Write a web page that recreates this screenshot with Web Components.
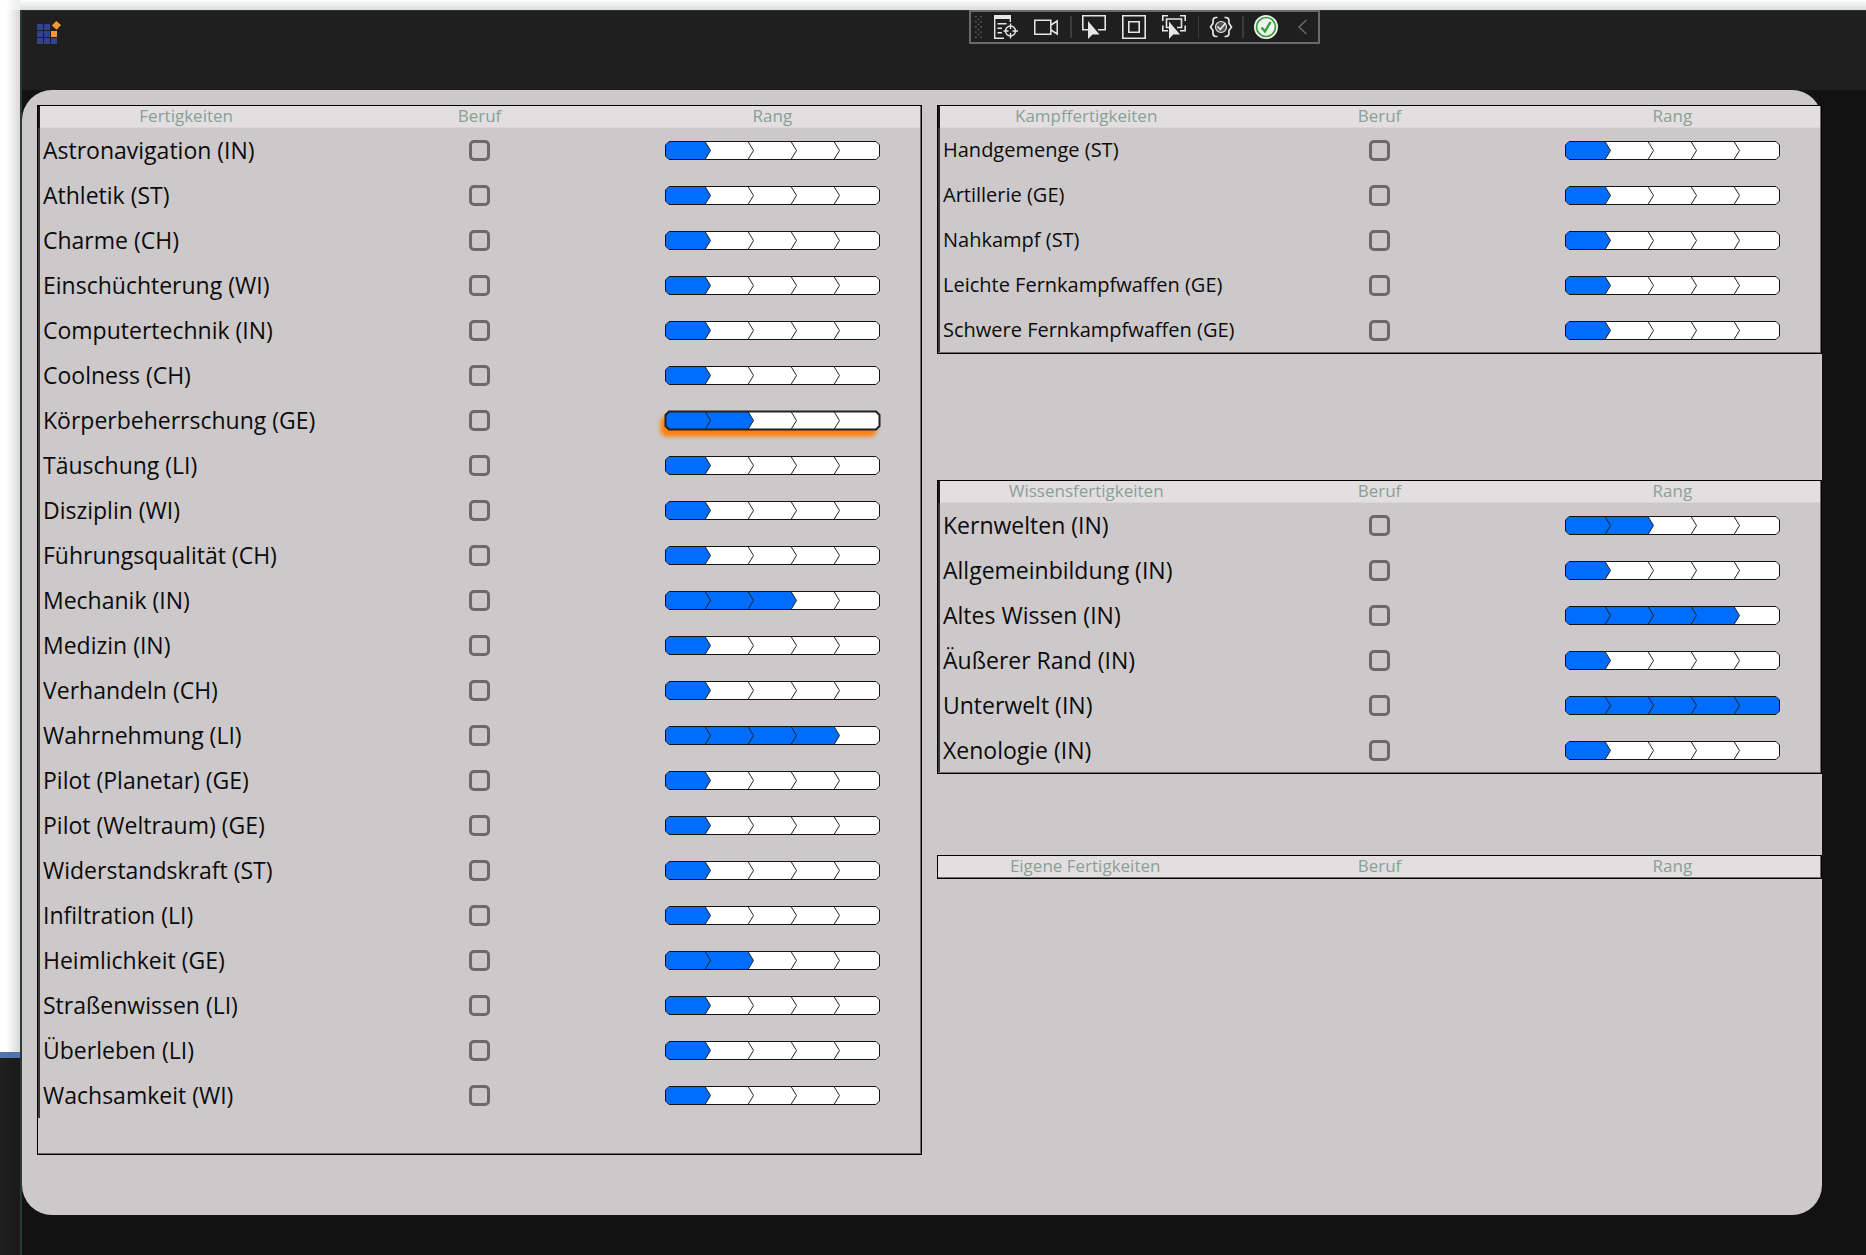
<!DOCTYPE html>
<html lang="de">
<head>
<meta charset="utf-8">
<title>Fertigkeiten</title>
<style>
  html, body { margin: 0; height: 100%; }
  body { font-family: "Open Sans", "Noto Sans", sans-serif; color: #0b0b0b; background: #fff; }
</style>
</head>
<body>
<app-desktop>
  <app-window>
    <app-logo slot="title"></app-logo>
    <debug-toolbar slot="overlay"></debug-toolbar>
    <skill-sheet>
      <skill-table slot="main" heading="Fertigkeiten">
        <skill-item rank="1">Astronavigation (IN)</skill-item>
        <skill-item rank="1">Athletik (ST)</skill-item>
        <skill-item rank="1">Charme (CH)</skill-item>
        <skill-item rank="1">Einschüchterung (WI)</skill-item>
        <skill-item rank="1">Computertechnik (IN)</skill-item>
        <skill-item rank="1">Coolness (CH)</skill-item>
        <skill-item rank="2" active>Körperbeherrschung (GE)</skill-item>
        <skill-item rank="1">Täuschung (LI)</skill-item>
        <skill-item rank="1">Disziplin (WI)</skill-item>
        <skill-item rank="1">Führungsqualität (CH)</skill-item>
        <skill-item rank="3">Mechanik (IN)</skill-item>
        <skill-item rank="1">Medizin (IN)</skill-item>
        <skill-item rank="1">Verhandeln (CH)</skill-item>
        <skill-item rank="4">Wahrnehmung (LI)</skill-item>
        <skill-item rank="1">Pilot (Planetar) (GE)</skill-item>
        <skill-item rank="1">Pilot (Weltraum) (GE)</skill-item>
        <skill-item rank="1">Widerstandskraft (ST)</skill-item>
        <skill-item rank="1">Infiltration (LI)</skill-item>
        <skill-item rank="2">Heimlichkeit (GE)</skill-item>
        <skill-item rank="1">Straßenwissen (LI)</skill-item>
        <skill-item rank="1">Überleben (LI)</skill-item>
        <skill-item rank="1">Wachsamkeit (WI)</skill-item>
      </skill-table>
      <skill-table slot="combat" heading="Kampffertigkeiten" compact>
        <skill-item rank="1">Handgemenge (ST)</skill-item>
        <skill-item rank="1">Artillerie (GE)</skill-item>
        <skill-item rank="1">Nahkampf (ST)</skill-item>
        <skill-item rank="1">Leichte Fernkampfwaffen (GE)</skill-item>
        <skill-item rank="1">Schwere Fernkampfwaffen (GE)</skill-item>
      </skill-table>
      <skill-table slot="knowledge" heading="Wissensfertigkeiten">
        <skill-item rank="2">Kernwelten (IN)</skill-item>
        <skill-item rank="1">Allgemeinbildung (IN)</skill-item>
        <skill-item rank="4">Altes Wissen (IN)</skill-item>
        <skill-item rank="1">Äußerer Rand (IN)</skill-item>
        <skill-item rank="5">Unterwelt (IN)</skill-item>
        <skill-item rank="1">Xenologie (IN)</skill-item>
      </skill-table>
      <skill-table slot="custom" heading="Eigene Fertigkeiten"></skill-table>
    </skill-sheet>
  </app-window>
</app-desktop>

<script>
const define = (name, html) => customElements.define(name, class extends HTMLElement {
  constructor() { super(); this.attachShadow({ mode: 'open' }).innerHTML = html; }
});

/* Backdrop: other windows showing at the top and left of the app */
define('app-desktop', `
  <style>
    :host { display: grid; box-sizing: border-box; min-height: 100vh; grid-template-columns: 20px 1fr; grid-template-rows: 10px 1fr; }
    .top { background: linear-gradient(#fdfdfd, #dcdcdc); }
    .side { display: flex; flex-direction: column; }
    .page { flex: 1; background: linear-gradient(90deg, #fff 30%, #d8d8d8); }
    .line { height: 6px; background: #5074ae; }
    .dark { height: 197px; background: linear-gradient(90deg, #202020, #191919); }
    .corner { background: linear-gradient(90deg, #fff 30%, #ececec); }
  </style>
  <div class="corner"></div>
  <div class="top"></div>
  <div class="side"><div class="page"></div><div class="line"></div><div class="dark"></div></div>
  <slot></slot>`);

define('app-window', `
  <style>
    :host { display: flex; flex-direction: column; position: relative; box-sizing: border-box; background: #121212; border-left: 2px solid #2a3a2e; }
    header { display: flex; align-items: flex-start; box-sizing: border-box; height: 80px; padding: 10px 15px; background: #1f1f1f; border-top: 1px solid #24382b; }
    main { flex: 1; display: flex; padding: 0 44px 40px 0; }
    ::slotted(skill-sheet) { flex: 1; }
    ::slotted(debug-toolbar) { position: absolute; top: 0; left: 947px; }
  </style>
  <header><slot name="title"></slot></header>
  <main><slot></slot></main>
  <slot name="overlay"></slot>`);

define('app-logo', `
  <style>:host { display: block; } svg { display: block; }</style>
  <svg width="24" height="24" viewBox="0 0 24 24" aria-hidden="true">
    <g fill="#33438a">
      <rect x="0" y="3" width="6" height="6"/><rect x="7" y="3" width="6" height="6"/>
      <rect x="0" y="10" width="6" height="6"/><rect x="7" y="10" width="6" height="6"/>
      <rect x="0" y="17" width="6" height="6"/><rect x="7" y="17" width="6" height="6"/><rect x="14" y="17" width="6" height="6"/>
    </g>
    <g fill="#f79a30"><rect x="14" y="10" width="6" height="6"/><path d="M19.3 0 24 4 19.6 8.800 14.800 4.500Z"/></g>
  </svg>`);

define('debug-toolbar', `
  <style>
    :host { display: flex; align-items: center; box-sizing: border-box; height: 34px; width: 351px; border: 2px solid #6a6a6a; background: #1f1f1f; }
    button { all: unset; display: block; width: 24px; height: 24px; margin-right: 16px; }
    button.end { margin-right: 12px; }
    button.near { margin-right: 9px; }
    button:last-child { margin-right: 0; }
    svg { display: block; }
    .grip { margin: 0 12px 0 4px; }
    i { width: 2px; height: 22px; background: #3d3d3d; margin-right: 10px; }
  </style>
  <svg class="grip" width="8" height="26" viewBox="0 0 8 26" aria-hidden="true">
    <path d="M0 1h8M0 7h8M0 13h8M0 19h8M0 25h8" stroke="#606060" stroke-width="1.500" stroke-dasharray="2 4"/>
    <path d="M3 4h5M3 10h5M3 16h5M3 22h5" stroke="#606060" stroke-width="1.500" stroke-dasharray="2 4"/>
  </svg>
  <button aria-label="Visuelle Struktur"><svg width="24" height="24" viewBox="0 0 24 24" fill="none" stroke="#e6e6e6" stroke-width="1.400">
    <path d="M0 0h17v4H0z" fill="#e6e6e6" stroke="none"/><path d="M.7 3v20.300H10M16.300 3v4M3.500 8.700h9M3.500 13.200h4.500M3.500 17.700h4.500"/>
    <circle cx="16.500" cy="16" r="5"/><path d="M16.500 8.500v5.500M16.500 18v5.500M9.500 16h5M18.500 16h5.500"/></svg></button>
  <button class="end" aria-label="Aufnahme"><svg width="24" height="24" viewBox="0 0 24 24" fill="none" stroke="#e6e6e6" stroke-width="1.500">
    <path d="M.8 5.200h16v14h-16zM17 10l6.200-4v13L17 15"/></svg></button>
  <i></i>
  <button aria-label="Element auswählen"><svg width="24" height="24" viewBox="0 0 24 24" fill="none" stroke="#e6e6e6" stroke-width="1.600">
    <path d="M6 14.800H.8V.8h22.400v14H16"/><path d="M6 6v18l4.500-4.500H17.500z" fill="#e6e6e6" stroke="none"/></svg></button>
  <button aria-label="Layoutrahmen anzeigen"><svg width="24" height="24" viewBox="0 0 24 24" fill="none" stroke="#e6e6e6" stroke-width="1.600">
    <path d="M.8.8h22.400v22.400H.8zM6.800 6.800h10.400v10.400H6.800z"/></svg></button>
  <button class="end" aria-label="Fokus verfolgen"><svg width="24" height="24" viewBox="0 0 24 24" fill="none" stroke="#e6e6e6" stroke-width="1.600">
    <path d="M.8 6V.8H6M18 .8h5.200V6M23.200 10.500v5.200H18M.8 10.500v5.200H6M7 12.500H4.500V4h15v8.500H15"/><path d="M7 6.500V24l4.200-4.500H18z" fill="#e6e6e6" stroke="none"/></svg></button>
  <i></i>
  <button class="near" aria-label="Bindungsfehler"><svg width="24" height="24" viewBox="0 0 24 24" fill="none" stroke="#e6e6e6" stroke-width="1.700">
    <path d="M8.500 2.500H7Q4 2.500 4 6v2.500L1.500 12 4 15.500V18q0 3.500 3 3.500h1.500M15.500 2.500H17q3 0 3 3.500v2.500l2.500 3.500-2.500 3.500V18q0 3.500-3 3.500h-1.500"/>
    <circle cx="12" cy="12" r="5.500" fill="#555" stroke-width="1.200"/><path d="m8.500 11.500 2.800 3L16.500 8"/></svg></button>
  <i></i>
  <button aria-label="Hot Reload"><svg width="24" height="24" viewBox="0 0 24 24" fill="none">
    <circle cx="12" cy="12" r="12" fill="#f2f2f2"/><circle cx="12" cy="12" r="9.500" stroke="#35a035" stroke-width="1.700"/><path d="m7.500 12.500 3.500 4 5.500-9.500" stroke="#35a035" stroke-width="2.400"/></svg></button>
  <button aria-label="Einklappen"><svg width="24" height="24" viewBox="0 0 24 24" fill="none" stroke="#6a6a6a" stroke-width="1.500"><path d="M12.500 5 5 12l7.500 7"/></svg></button>`);

/* Rounded panel: one full-height column and one split into three equal bands */
define('skill-sheet', `
  <style>
    :host { display: grid; grid-template-columns: 1fr 1fr; background: #cdc9ca; border-radius: 30px; }
    div { display: grid; align-items: start; }
    .left { align-items: stretch; padding: 15px 0 60px 15px; }
    .right { grid-template-rows: repeat(3, 1fr); padding-left: 15px; }
    .right > slot { display: block; padding-top: 15px; }
  </style>
  <div class="left"><slot name="main"></slot></div>
  <div class="right"><slot name="combat"></slot><slot name="knowledge"></slot><slot name="custom"></slot></div>`);

/* Five-step chevron bar */
customElements.define('rank-bar', class extends HTMLElement {
  connectedCallback() {
    const rank = +this.getAttribute('rank');
    const x = rank * 43;
    const fill = rank >= 5 ? 'M4 .5H211L214.500 4V15L211 18.500H4L.5 15V4Z'
      : `M4 .5H${x - 3}L${x + 2.5} 9.500L${x - 3} 18.500H4L.5 15V4Z`;
    const steps = [1, 2, 3, 4].map(k => `M${k * 43 - 3} .5L${k * 43 + 2.5} 9.500L${k * 43 - 3} 18.500`).join('');
    this.attachShadow({ mode: 'open' }).innerHTML = `
      <style>
        :host { display: block; width: 215px; height: 19px; }
        :host([active]) svg { filter: drop-shadow(-4px 6px 2px #ff7f08); }
        :host([active]) .edge { stroke: #222; stroke-width: 2; }
        svg { display: block; overflow: visible; }
      </style>
      <svg width="215" height="19" viewBox="0 0 215 19" fill="none" role="img" aria-label="Rang ${rank} von 5">
        <path d="M4 .5H211L214.500 4V15L211 18.500H4L.5 15V4Z" fill="#fff"/>
        <path d="${fill}" fill="#006dff"/>
        <path d="${steps}" stroke="#222"/>
        <path class="edge" d="M4 .5H211L214.500 4V15L211 18.500H4L.5 15V4Z" stroke="#141414"/>
      </svg>`;
  }
});

customElements.define('skill-item', class extends HTMLElement {});

customElements.define('skill-table', class extends HTMLElement {
  connectedCallback() {
    const rows = [...this.querySelectorAll('skill-item')].map((item, i) => `
      <tr><td><label for="s${i}">${item.textContent}</label></td>
      <td><input type="checkbox" id="s${i}"></td>
      <td><rank-bar rank="${item.getAttribute('rank')}" ${item.hasAttribute('active') ? 'active' : ''}></rank-bar></td></tr>`).join('');
    this.replaceChildren();
    this.attachShadow({ mode: 'open' }).innerHTML = `
      <style>
        :host { display: block; position: relative; box-sizing: border-box; border: 1px solid #000; font-size: 23px; }
        :host([compact]) { font-size: 20px; }
        :host::after { content: ""; position: absolute; inset: 0; border: solid #6b696a; border-width: 0 1px 1px 0; pointer-events: none; }
        table { width: 100%; table-layout: fixed; border-collapse: separate; border-spacing: 0; }
        th { box-sizing: border-box; height: 22px; padding: 0 0 2px; background: #e3dfe0; font-size: 17px; line-height: 20px; font-weight: 400; color: #8a9f97; box-shadow: inset 0 -1px #d9d6d7; }
        td { box-sizing: border-box; height: 45px; padding: 0; line-height: 32px; }
        td:first-child { padding-left: 3px; border-left: 2px solid #3a393a; white-space: nowrap; }
        th:last-child, td:last-child { padding-right: 3px; }
        .filled th:first-child { border-left: 2px solid #181818; }
        label { display: block; padding-bottom: 2px; }
        input { appearance: none; display: block; box-sizing: border-box; width: 21px; height: 21px; margin: 0 auto; border: 3px solid #6b696a; border-radius: 5px; }
        rank-bar { margin: 0 auto; }
      </style>
      <table class="${rows ? 'filled' : ''}">
        <thead><tr><th scope="col">${this.getAttribute('heading')}</th><th scope="col">Beruf</th><th scope="col">Rang</th></tr></thead>
        <tbody>${rows}</tbody>
      </table>`;
  }
});
</script>
</body>
</html>
